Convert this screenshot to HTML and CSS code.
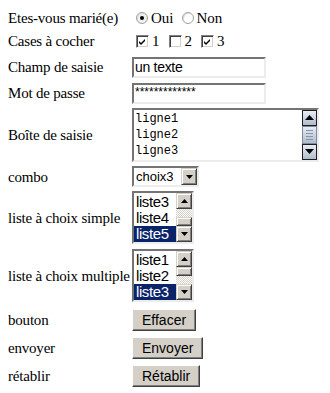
FILE: index.html
```html
<!DOCTYPE html>
<html>
<head>
<meta charset="utf-8">
<link rel="stylesheet" href="styles.css">
</head>
<body>
<div class="form">
  <div class="label">Etes-vous marié(e)</div>
  <div class="field">
    <span class="radio on"></span><span class="opt">Oui</span>
    <span class="radio"></span><span class="opt">Non</span>
  </div>

  <div class="label">Cases à cocher</div>
  <div class="field">
    <span class="check"><svg width="9" height="9" viewBox="0 0 9 9"><path d="M1 4 L3 6 L7 2 L7 4 L3 8 L1 6 Z" fill="#000"/></svg></span><span class="opt">1</span>
    <span class="check"></span><span class="opt">2</span>
    <span class="check"><svg width="9" height="9" viewBox="0 0 9 9"><path d="M1 4 L3 6 L7 2 L7 4 L3 8 L1 6 Z" fill="#000"/></svg></span><span class="opt">3</span>
  </div>

  <div class="label">Champ de saisie</div>
  <div class="field"><div class="text">un texte</div></div>

  <div class="label">Mot de passe</div>
  <div class="field"><div class="text pwd">*************</div></div>

  <div class="label">Boîte de saisie</div>
  <div class="field">
    <div class="area">
      <div class="area-lines">ligne1<br>ligne2<br>ligne3</div>
      <div class="xpbar">
        <span class="xpbtn"><svg width="9" height="5" viewBox="0 0 9 5"><path d="M0 5 L4.5 0 L9 5 Z" fill="#000"/></svg></span>
        <span class="xpthumb"><i></i><i></i><i></i><i></i></span>
        <span class="xpbtn"><svg width="9" height="5" viewBox="0 0 9 5"><path d="M0 0 L4.5 5 L9 0 Z" fill="#000"/></svg></span>
      </div>
    </div>
  </div>

  <div class="label">combo</div>
  <div class="field">
    <div class="combo"><span class="combo-val">choix3</span><span class="btn3d small"><svg width="7" height="4" viewBox="0 0 7 4"><path d="M0 0 L3.5 4 L7 0 Z" fill="#000"/></svg></span></div>
  </div>

  <div class="label">liste à choix simple</div>
  <div class="field">
    <div class="list">
      <div class="items"><div>liste3</div><div>liste4</div><div class="sel">liste5</div></div>
      <div class="cbar">
        <span class="btn3d small"><svg width="7" height="4" viewBox="0 0 7 4"><path d="M0 4 L3.5 0 L7 4 Z" fill="#000"/></svg></span>
        <span class="track"></span>
        <span class="btn3d thumb"></span>
        <span class="btn3d small"><svg width="7" height="4" viewBox="0 0 7 4"><path d="M0 0 L3.5 4 L7 0 Z" fill="#000"/></svg></span>
      </div>
    </div>
  </div>

  <div class="label">liste à choix multiple</div>
  <div class="field">
    <div class="list">
      <div class="items"><div>liste1</div><div>liste2</div><div class="sel">liste3</div></div>
      <div class="cbar">
        <span class="btn3d small"><svg width="7" height="4" viewBox="0 0 7 4"><path d="M0 4 L3.5 0 L7 4 Z" fill="#000"/></svg></span>
        <span class="btn3d thumb"></span>
        <span class="track"></span>
        <span class="btn3d small"><svg width="7" height="4" viewBox="0 0 7 4"><path d="M0 0 L3.5 4 L7 0 Z" fill="#000"/></svg></span>
      </div>
    </div>
  </div>

  <div class="label">bouton</div>
  <div class="field"><span class="button">Effacer</span></div>

  <div class="label">envoyer</div>
  <div class="field"><span class="button">Envoyer</span></div>

  <div class="label">rétablir</div>
  <div class="field"><span class="button">Rétablir</span></div>
</div>
</body>
</html>
```

FILE: styles.css
```css
html, body {
  margin: 0;
  background: #fff;
}
body {
  padding: 7px 0 0 8px;
  font-family: "Liberation Serif", "Times New Roman", serif;
  font-size: 15px;
  color: #000;
}
.form {
  display: grid;
  grid-template-columns: 124px auto;
  grid-template-rows: 21px 26px 26px 26px 57px 27px 55px 61px 28px 28px 28px;
  justify-content: start;
  align-items: center;
}
.label {
  line-height: 18px;
  white-space: nowrap;
  letter-spacing: -0.2px;
}
.field {
  display: flex;
  align-items: center;
}

/* radio */
.radio {
  box-sizing: border-box;
  width: 12px;
  height: 12px;
  border-radius: 50%;
  background: #fff;
  border: 1px solid #a0a0a0;
  box-shadow: inset 1px 1px 0 #e0e0e0;
  margin: 0 3px 0 4px;
  display: inline-flex;
  align-items: center;
  justify-content: center;
}
.radio + .opt + .radio {
  margin-left: 8px;
}
.radio.on {
  background: #f0f0f0;
}
.radio.on::after {
  content: "";
  width: 4px;
  height: 4px;
  border-radius: 50%;
  background: #000;
}
.opt {
  line-height: 18px;
}

/* checkbox */
.check {
  box-sizing: border-box;
  width: 13px;
  height: 13px;
  background: #fff;
  border-top: 1px solid #808080;
  border-left: 1px solid #808080;
  border-right: 1px solid #fff;
  border-bottom: 1px solid #fff;
  box-shadow: inset 1px 1px 0 #404040, inset -1px -1px 0 #d4d0c8;
  margin: 0 3px 0 4px;
  display: inline-flex;
  align-items: center;
  justify-content: center;
}
.check + .opt {
  margin-right: 5px;
}

/* text input */
.text {
  box-sizing: border-box;
  width: 134px;
  height: 21px;
  border-top: 2px solid #747474;
  border-left: 2px solid #747474;
  border-right: 2px solid #ececec;
  border-bottom: 2px solid #ececec;
  font-family: "Liberation Sans", Arial, sans-serif;
  font-size: 14px;
  line-height: 17px;
  padding-left: 1px;
  letter-spacing: -0.3px;
  background: #fff;
}
.pwd {
  font-size: 12px;
  line-height: 12px;
  padding-top: 1px;
  letter-spacing: 0;
}

/* textarea */
.area {
  box-sizing: border-box;
  width: 187px;
  height: 54px;
  border-top: 2px solid #747474;
  border-left: 2px solid #747474;
  border-right: 2px solid #ececec;
  border-bottom: 2px solid #ececec;
  display: flex;
  background: #fff;
}
.area-lines {
  flex: 1;
  font-family: "Liberation Mono", "Courier New", monospace;
  font-size: 12px;
  line-height: 16px;
  padding: 1px 0 0 1px;
}
.xpbar {
  width: 15px;
  display: flex;
  flex-direction: column;
  background: #e8e8ec;
}
.xpbtn, .xpthumb {
  box-sizing: border-box;
  height: 16px;
  border: 1px solid #1e1e1e;
  background: linear-gradient(#e8ecf4, #b0bccc);
  display: flex;
  align-items: center;
  justify-content: center;
}
.xpthumb {
  flex: 1;
  flex-direction: column;
  gap: 2px;
  border-color: #7c8aa0;
}
.xpthumb i {
  display: block;
  width: 7px;
  height: 1px;
  background: #8894a8;
}

/* classic 3d button piece */
.btn3d {
  box-sizing: border-box;
  background: #d4d0c8;
  border-top: 1px solid #d4d0c8;
  border-left: 1px solid #d4d0c8;
  border-right: 1px solid #404040;
  border-bottom: 1px solid #404040;
  box-shadow: inset 1px 1px 0 #fff, inset -1px -1px 0 #808080;
  display: flex;
  align-items: center;
  justify-content: center;
}
.btn3d.small {
  width: 16px;
  height: 16px;
  flex: none;
}

/* combo */
.combo {
  box-sizing: border-box;
  width: 67px;
  height: 21px;
  border-top: 2px solid #747474;
  border-left: 2px solid #747474;
  border-right: 2px solid #ececec;
  border-bottom: 2px solid #ececec;
  display: flex;
  align-items: stretch;
  background: #fff;
}
.combo-val {
  flex: 1;
  font-family: "Liberation Sans", Arial, sans-serif;
  font-size: 13px;
  line-height: 17px;
  padding-left: 2px;
}
.combo .btn3d.small {
  height: 17px;
}

/* list boxes */
.list {
  box-sizing: border-box;
  width: 62px;
  height: 53px;
  border-top: 2px solid #747474;
  border-left: 2px solid #747474;
  border-right: 2px solid #ececec;
  border-bottom: 2px solid #ececec;
  display: flex;
  background: #fff;
}
.items {
  flex: 1;
  font-family: "Liberation Sans", Arial, sans-serif;
  font-size: 15px;
  letter-spacing: -0.4px;
  line-height: 16px;
  padding-top: 1px;
  overflow: hidden;
}
.items div {
  padding-left: 2px;
  height: 16px;
}
.items .sel {
  background: #0a246a;
  color: #fff;
}
.cbar {
  width: 16px;
  display: flex;
  flex-direction: column;
}
.track {
  height: 8px;
  flex: none;
  background-color: #fff;
  background-image: repeating-conic-gradient(#d4d0c8 0 25%, #fff 0 50%);
  background-size: 2px 2px;
}
.thumb {
  flex: 1;
}

/* buttons */
.button {
  box-sizing: border-box;
  height: 22px;
  padding: 0 9px;
  background: #d4d0c8;
  border-top: 1px solid #fff;
  border-left: 1px solid #fff;
  border-right: 1px solid #404040;
  border-bottom: 1px solid #404040;
  box-shadow: inset -1px -1px 0 #808080;
  font-family: "Liberation Sans", Arial, sans-serif;
  font-size: 14px;
  line-height: 20px;
}
```
